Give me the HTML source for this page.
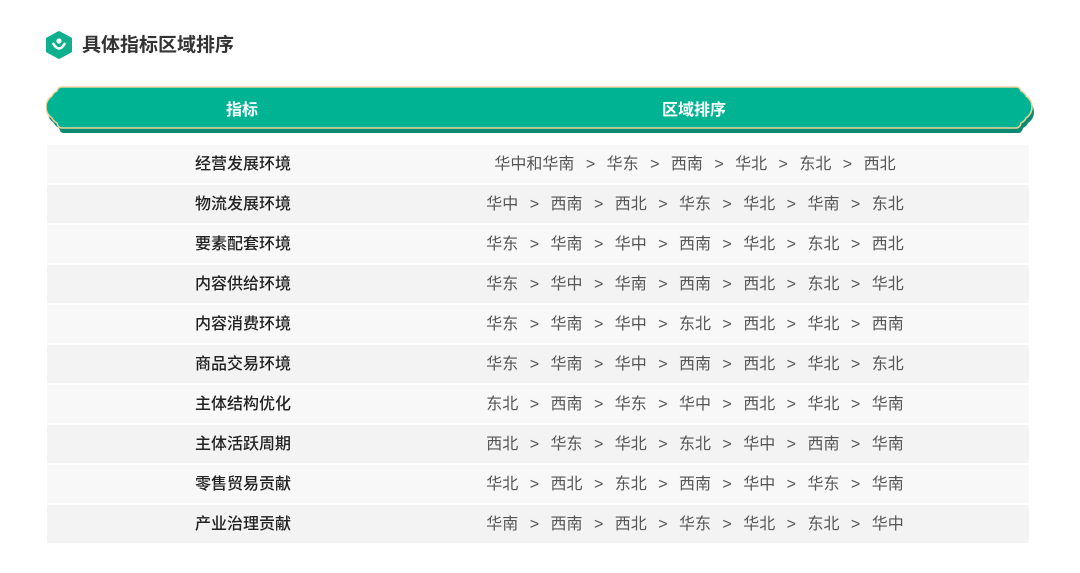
<!DOCTYPE html>
<html><head><meta charset="utf-8"><style>
body{margin:0;width:1080px;height:573px;background:#fff;font-family:"Liberation Sans","Noto Sans CJK SC",sans-serif;position:relative;overflow:hidden}
.title{position:absolute;left:82px;top:30px;font-size:19px;font-weight:bold;color:#333}
.hdr{position:absolute;left:46px;top:84px}
.hl{position:absolute;top:96px;color:#fff;font-weight:bold;font-size:16px;width:200px;text-align:center}
.row{position:absolute;left:47px;width:982px;height:38px;font-size:16px;color:#555;line-height:40px}
.row .a{position:absolute;left:96px;width:200px;text-align:center;color:#222;font-weight:500}
.row .b{position:absolute;left:248px;width:800px;text-align:center;word-spacing:7px}
</style></head><body>
<svg style="position:absolute;left:46px;top:31px" width="26" height="28" viewBox="0 0 26 28"><path d="M13 1 L25 7.5 V20.5 L13 27 L1 20.5 V7.5 Z" fill="#0fb08e" stroke="#0fb08e" stroke-linejoin="round" stroke-width="2"/><circle cx="13" cy="10" r="2.6" fill="#fff"/><path d="M7.5 13 Q13 22 18.5 13" fill="none" stroke="#fff" stroke-width="2.6" stroke-linecap="round"/></svg>
<div class="title">具体指标区域排序</div>
<svg class="hdr" width="988" height="52" viewBox="0 0 988 52">
<path d="M16 5 H970 Q974 5 975 9 Q979 11 980 14 Q986 18 986 25 Q986 32 980 36 Q979 39 975 41 Q974 46 970 46 H16 Q12 46 11 41 Q7 39 6 36 Q0 32 0 25 Q0 18 6 14 Q7 11 11 9 Q12 5 16 5 Z" fill="#0a8a6e" transform="translate(2,3)"/>
<path d="M16 3 H970 Q974 3 975 7 Q979 9 980 12 Q986 16 986 23 Q986 30 980 34 Q979 37 975 39 Q974 44 970 44 H16 Q12 44 11 39 Q7 37 6 34 Q0 30 0 23 Q0 16 6 12 Q7 9 11 7 Q12 3 16 3 Z" fill="#00b493" stroke="#ecd39c" stroke-width="1.5"/>
</svg>
<div class="hl" style="left:142px">指标</div>
<div class="hl" style="left:594px">区域排序</div>
<div class="row" style="top:145px;background:#f8f8f8"><span class="a">经营发展环境</span><span class="b">华中和华南 &gt; 华东 &gt; 西南 &gt; 华北 &gt; 东北 &gt; 西北</span></div>
<div class="row" style="top:185px;background:#f3f3f3"><span class="a">物流发展环境</span><span class="b">华中 &gt; 西南 &gt; 西北 &gt; 华东 &gt; 华北 &gt; 华南 &gt; 东北</span></div>
<div class="row" style="top:225px;background:#f8f8f8"><span class="a">要素配套环境</span><span class="b">华东 &gt; 华南 &gt; 华中 &gt; 西南 &gt; 华北 &gt; 东北 &gt; 西北</span></div>
<div class="row" style="top:265px;background:#f3f3f3"><span class="a">内容供给环境</span><span class="b">华东 &gt; 华中 &gt; 华南 &gt; 西南 &gt; 西北 &gt; 东北 &gt; 华北</span></div>
<div class="row" style="top:305px;background:#f8f8f8"><span class="a">内容消费环境</span><span class="b">华东 &gt; 华南 &gt; 华中 &gt; 东北 &gt; 西北 &gt; 华北 &gt; 西南</span></div>
<div class="row" style="top:345px;background:#f3f3f3"><span class="a">商品交易环境</span><span class="b">华东 &gt; 华南 &gt; 华中 &gt; 西南 &gt; 西北 &gt; 华北 &gt; 东北</span></div>
<div class="row" style="top:385px;background:#f8f8f8"><span class="a">主体结构优化</span><span class="b">东北 &gt; 西南 &gt; 华东 &gt; 华中 &gt; 西北 &gt; 华北 &gt; 华南</span></div>
<div class="row" style="top:425px;background:#f3f3f3"><span class="a">主体活跃周期</span><span class="b">西北 &gt; 华东 &gt; 华北 &gt; 东北 &gt; 华中 &gt; 西南 &gt; 华南</span></div>
<div class="row" style="top:465px;background:#f8f8f8"><span class="a">零售贸易贡献</span><span class="b">华北 &gt; 西北 &gt; 东北 &gt; 西南 &gt; 华中 &gt; 华东 &gt; 华南</span></div>
<div class="row" style="top:505px;background:#f3f3f3"><span class="a">产业治理贡献</span><span class="b">华南 &gt; 西南 &gt; 西北 &gt; 华东 &gt; 华北 &gt; 东北 &gt; 华中</span></div>
</body></html>
